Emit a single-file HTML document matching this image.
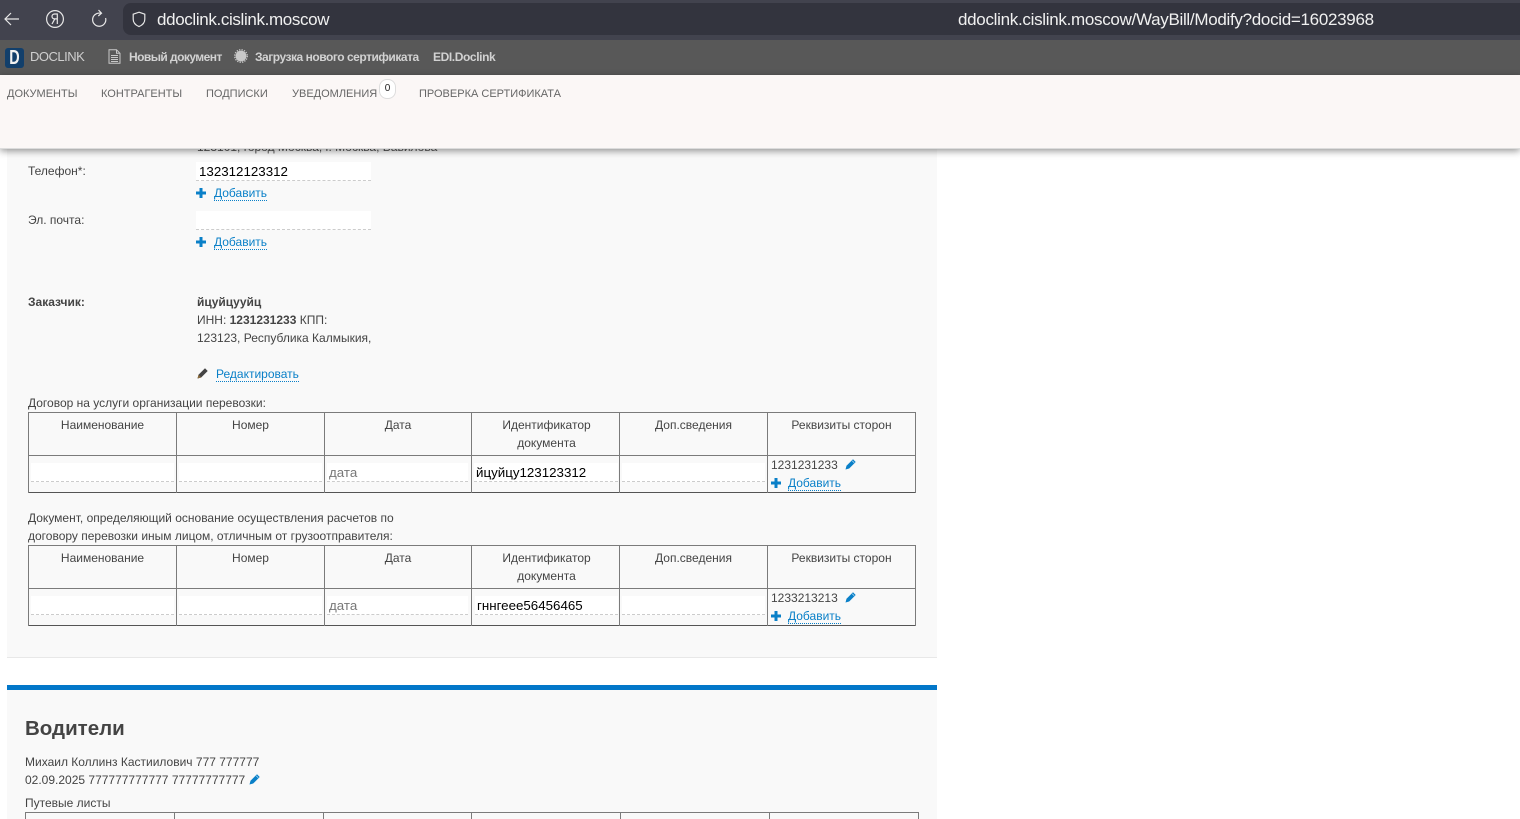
<!DOCTYPE html>
<html lang="ru">
<head>
<meta charset="utf-8">
<title>DOCLINK</title>
<style>
html,body{margin:0;padding:0;width:1520px;height:819px;overflow:hidden;background:#fff}
body{position:relative;font-family:"Liberation Sans","DejaVu Sans",sans-serif;font-size:12px;color:#444}
.a{position:absolute;white-space:nowrap}
.t{position:absolute;white-space:nowrap;line-height:18px;font-size:12px;color:#444}
.b{font-weight:bold}
.link{position:absolute;white-space:nowrap;font-size:12px;line-height:14px;color:#0a80c8;border-bottom:1px dotted #0a80c8}
.inp{position:absolute;background:#fff;border-bottom:1px dashed #ccc;height:18px;line-height:19px;font-size:13.333px;color:#000;box-sizing:content-box;overflow:hidden}
.tv{line-height:20px}
.line{position:absolute;background:#7b7b7b}
.th{position:absolute;text-align:center;font-size:12px;line-height:18px;color:#444}
svg{position:absolute;display:block}
</style>
</head>
<body>

<!-- browser bar -->
<div class="a" style="left:0;top:0;width:1520px;height:40px;background:#42434e"></div>
<div class="a" style="left:123px;top:3px;width:1397px;height:32px;background:#33343e;border-radius:8px 0 0 8px"></div>
<svg style="left:3px;top:10px" width="18" height="18" viewBox="0 0 18 18" fill="none" stroke="#e8e8e8" stroke-width="1.2"><path d="M16 9H2M8 3L2 9l6 6"/></svg>
<svg style="left:45px;top:9px" width="20" height="20" viewBox="0 0 20 20" fill="none" stroke="#e8e8e8" stroke-width="1.2"><circle cx="10" cy="10" r="8.4"/><path d="M12.3 15V5H9.6C8 5 7 6 7 7.4S8 9.9 9.6 9.9h2.7M9.8 9.9L7 15"/></svg>
<svg style="left:90px;top:9px" width="18" height="20" viewBox="0 0 18 20" fill="none" stroke="#e8e8e8" stroke-width="1.2"><path d="M10.5 4.2A6.6 6.6 0 1 0 15.6 9M8.5 1l3 3.2-3.2 2.8"/></svg>
<svg style="left:132px;top:11px" width="14" height="17" viewBox="0 0 14 17" fill="none" stroke="#e6e6e6" stroke-width="1.2"><path d="M7 1.2l5.8 2v5c0 3.6-2.6 6-5.8 7.4C3.800 14.200 1.200 11.800 1.200 8.200v-5z"/></svg>
<div class="a" style="left:157px;top:10px;font-size:17px;line-height:20px;color:#f0f0f0;letter-spacing:-.36px">ddoclink.cislink.moscow</div>
<div class="a" style="left:958px;top:10px;font-size:17px;line-height:20px;color:#f0f0f0;letter-spacing:-.3px">ddoclink.cislink.moscow/WayBill/Modify?docid=16023968</div>

<!-- site top bar -->
<div class="a" style="left:0;top:40px;width:1520px;height:35px;background:#585858"></div>
<div class="a" style="left:5px;top:48px;width:19px;height:20px;background:#123f6b;border-radius:3px"></div>
<div class="a b" style="left:5px;top:48px;width:19px;height:20px;line-height:21px;text-align:center;color:#f2f2f2;font-size:20px;transform:scaleX(.72)">D</div>
<div class="a" style="left:30px;top:49px;font-size:13px;line-height:16px;color:#cfcfcf;letter-spacing:-.5px">DOCLINK</div>
<svg style="left:108px;top:49px" width="13" height="15" viewBox="0 0 13 15" fill="none" stroke="#c8c8c8" stroke-width="1"><path d="M1 .8h7.500l3.500 3.500v9.900H1zM8.500.8v3.500H12M3 6.500h7M3 8.500h7M3 10.500h7M3 12.500h7"/></svg>
<div class="a b" style="left:129px;top:49px;font-size:12px;line-height:16px;color:#d2d2d2;letter-spacing:-.55px">Новый документ</div>
<svg style="left:234px;top:49px" width="14" height="14" viewBox="0 0 14 14"><circle cx="7" cy="7" r="5.400" fill="#c8c8c8"/><circle cx="7" cy="7" r="6.300" fill="none" stroke="#c8c8c8" stroke-width="1.300" stroke-dasharray="1.300 1.200"/></svg>
<div class="a b" style="left:255px;top:49px;font-size:12px;line-height:16px;color:#d2d2d2;letter-spacing:-.47px">Загрузка нового сертификата</div>
<div class="a b" style="left:433px;top:49px;font-size:12px;line-height:16px;color:#d2d2d2;letter-spacing:-.4px">EDI.Doclink</div>

<!-- page panels -->
<div class="a" style="left:7px;top:140px;width:930px;height:517px;background:#f9f9f9;border-bottom:1px solid #e8e8e8"></div>
<div class="a" style="left:7px;top:685px;width:930px;height:5px;background:#0277c9"></div>
<div class="a" style="left:7px;top:690px;width:930px;height:129px;background:#f9f9f9"></div>

<div class="t" style="left:197px;top:138px;color:#555">123101, город Москва, г. Москва, Вавилова</div>

<!-- nav -->
<div class="a" style="left:0;top:75px;width:1520px;height:73px;background:#fbf7f6;border-bottom:1px solid #dcdcdc;box-shadow:0 2px 7px rgba(0,0,0,.42)"></div>
<div class="a" style="left:7px;top:87px;font-size:11px;line-height:14px;color:#666">ДОКУМЕНТЫ</div>
<div class="a" style="left:101px;top:87px;font-size:11px;line-height:14px;color:#666">КОНТРАГЕНТЫ</div>
<div class="a" style="left:206px;top:87px;font-size:11px;line-height:14px;color:#666">ПОДПИСКИ</div>
<div class="a" style="left:292px;top:87px;font-size:11px;line-height:14px;color:#666">УВЕДОМЛЕНИЯ</div>
<div class="a" style="left:379px;top:79px;width:15px;height:18px;background:#fff;border:1px solid #ddd;border-radius:8px;text-align:center;font-size:10px;line-height:18px;color:#222">0</div>
<div class="a" style="left:419px;top:87px;font-size:11px;line-height:14px;color:#666">ПРОВЕРКА СЕРТИФИКАТА</div>

<!-- form -->
<div class="t" style="left:28px;top:162px">Телефон*:</div>
<div class="inp" style="left:196px;top:162px;width:172px;padding-left:3px">132312123312</div>
<svg style="left:196px;top:188px" width="10" height="10" viewBox="0 0 10 10"><path d="M3.500 0h3v3.500H10v3H6.500V10h-3V6.500H0v-3h3.500z" fill="#0a80c8"/></svg>
<div class="link" style="left:214px;top:186px">Добавить</div>

<div class="t" style="left:28px;top:211px">Эл. почта:</div>
<div class="inp" style="left:196px;top:211px;width:175px"></div>
<svg style="left:196px;top:237px" width="10" height="10" viewBox="0 0 10 10"><path d="M3.500 0h3v3.500H10v3H6.500V10h-3V6.500H0v-3h3.500z" fill="#0a80c8"/></svg>
<div class="link" style="left:214px;top:235px">Добавить</div>

<div class="t b" style="left:28px;top:293px">Заказчик:</div>
<div class="t b" style="left:197px;top:293px">йцуйцууйц</div>
<div class="t" style="left:197px;top:311px">ИНН: <b>1231231233</b> КПП:</div>
<div class="t" style="left:197px;top:329px">123123, Республика Калмыкия,</div>
<svg style="left:197px;top:368px" width="11" height="11" viewBox="0 0 11 11"><path d="M.5 10.500l1-3.700L8 .3 10.700 3 4.200 9.500z" fill="#444"/><path d="M.5 10.500l1-3.700 2.700 2.700z" fill="#8a6a3a"/></svg>
<div class="link" style="left:216px;top:367px">Редактировать</div>

<div class="t" style="left:28px;top:394px">Договор на услуги организации перевозки:</div>

<!-- table 1 -->
<div class="line" style="left:28px;top:412px;width:888px;height:1px"></div>
<div class="line" style="left:28px;top:455px;width:888px;height:1px"></div>
<div class="line" style="left:28px;top:492px;width:888px;height:1px;background:#555"></div>
<div class="line" style="left:28px;top:412px;width:1px;height:81px"></div>
<div class="line" style="left:176px;top:412px;width:1px;height:81px"></div>
<div class="line" style="left:324px;top:412px;width:1px;height:81px"></div>
<div class="line" style="left:471px;top:412px;width:1px;height:81px"></div>
<div class="line" style="left:619px;top:412px;width:1px;height:81px"></div>
<div class="line" style="left:767px;top:412px;width:1px;height:81px"></div>
<div class="line" style="left:915px;top:412px;width:1px;height:81px"></div>
<div class="th" style="left:29px;top:416px;width:147px">Наименование</div>
<div class="th" style="left:177px;top:416px;width:147px">Номер</div>
<div class="th" style="left:325px;top:416px;width:146px">Дата</div>
<div class="th" style="left:473px;top:416px;width:147px">Идентификатор<br>документа</div>
<div class="th" style="left:620px;top:416px;width:147px">Доп.сведения</div>
<div class="th" style="left:768px;top:416px;width:147px">Реквизиты сторон</div>
<div class="inp" style="left:31px;top:463px;width:143px"></div>
<div class="inp" style="left:179px;top:463px;width:143px"></div>
<div class="inp tv" style="left:327px;top:463px;width:139px;padding-left:2px;color:#777">дата</div>
<div class="inp tv" style="left:474px;top:463px;width:142px;padding-left:2px">йцуйцу123123312</div>
<div class="inp" style="left:622px;top:463px;width:143px"></div>
<div class="t" style="left:771px;top:456px">1231231233</div>
<svg style="left:845px;top:459px" width="11" height="11" viewBox="0 0 11 11"><path d="M.5 10.500l1-3.700L8 .3 10.700 3 4.200 9.500z" fill="#0a80c8"/><path d="M7.200 1.800l2 2" stroke="#bfe0f5" stroke-width=".7"/></svg>
<svg style="left:771px;top:478px" width="10" height="10" viewBox="0 0 10 10"><path d="M3.500 0h3v3.500H10v3H6.500V10h-3V6.500H0v-3h3.500z" fill="#0a80c8"/></svg>
<div class="link" style="left:788px;top:476px">Добавить</div>

<div class="t" style="left:28px;top:509px">Документ, определяющий основание осуществления расчетов по</div>
<div class="t" style="left:28px;top:527px">договору перевозки иным лицом, отличным от грузоотправителя:</div>

<!-- table 2 -->
<div class="line" style="left:28px;top:545px;width:888px;height:1px"></div>
<div class="line" style="left:28px;top:588px;width:888px;height:1px"></div>
<div class="line" style="left:28px;top:625px;width:888px;height:1px;background:#555"></div>
<div class="line" style="left:28px;top:545px;width:1px;height:81px"></div>
<div class="line" style="left:176px;top:545px;width:1px;height:81px"></div>
<div class="line" style="left:324px;top:545px;width:1px;height:81px"></div>
<div class="line" style="left:471px;top:545px;width:1px;height:81px"></div>
<div class="line" style="left:619px;top:545px;width:1px;height:81px"></div>
<div class="line" style="left:767px;top:545px;width:1px;height:81px"></div>
<div class="line" style="left:915px;top:545px;width:1px;height:81px"></div>
<div class="th" style="left:29px;top:549px;width:147px">Наименование</div>
<div class="th" style="left:177px;top:549px;width:147px">Номер</div>
<div class="th" style="left:325px;top:549px;width:146px">Дата</div>
<div class="th" style="left:473px;top:549px;width:147px">Идентификатор<br>документа</div>
<div class="th" style="left:620px;top:549px;width:147px">Доп.сведения</div>
<div class="th" style="left:768px;top:549px;width:147px">Реквизиты сторон</div>
<div class="inp" style="left:31px;top:596px;width:143px"></div>
<div class="inp" style="left:179px;top:596px;width:143px"></div>
<div class="inp tv" style="left:327px;top:596px;width:139px;padding-left:2px;color:#777">дата</div>
<div class="inp tv" style="left:475px;top:596px;width:141px;padding-left:2px">гннгеее56456465</div>
<div class="inp" style="left:622px;top:596px;width:143px"></div>
<div class="t" style="left:771px;top:589px">1233213213</div>
<svg style="left:845px;top:592px" width="11" height="11" viewBox="0 0 11 11"><path d="M.5 10.500l1-3.700L8 .3 10.700 3 4.200 9.500z" fill="#0a80c8"/><path d="M7.200 1.800l2 2" stroke="#bfe0f5" stroke-width=".7"/></svg>
<svg style="left:771px;top:611px" width="10" height="10" viewBox="0 0 10 10"><path d="M3.500 0h3v3.500H10v3H6.500V10h-3V6.500H0v-3h3.500z" fill="#0a80c8"/></svg>
<div class="link" style="left:788px;top:609px">Добавить</div>

<!-- drivers -->
<div class="a b" style="left:25px;top:717px;font-size:20.5px;line-height:24px;color:#444">Водители</div>
<div class="t" style="left:25px;top:753px">Михаил Коллинз Кастиилович 777 777777</div>
<div class="t" style="left:25px;top:771px">02.09.2025 777777777777 77777777777</div>
<svg style="left:249px;top:774px" width="11" height="11" viewBox="0 0 11 11"><path d="M.5 10.500l1-3.700L8 .3 10.700 3 4.200 9.500z" fill="#0a80c8"/><path d="M7.200 1.800l2 2" stroke="#bfe0f5" stroke-width=".7"/></svg>
<div class="t" style="left:25px;top:794px">Путевые листы</div>

<div class="line" style="left:25px;top:812px;width:894px;height:1px"></div>
<div class="line" style="left:25px;top:812px;width:1px;height:7px"></div>
<div class="line" style="left:174px;top:812px;width:1px;height:7px"></div>
<div class="line" style="left:323px;top:812px;width:1px;height:7px"></div>
<div class="line" style="left:471px;top:812px;width:1px;height:7px"></div>
<div class="line" style="left:620px;top:812px;width:1px;height:7px"></div>
<div class="line" style="left:769px;top:812px;width:1px;height:7px"></div>
<div class="line" style="left:918px;top:812px;width:1px;height:7px"></div>

</body>
</html>
